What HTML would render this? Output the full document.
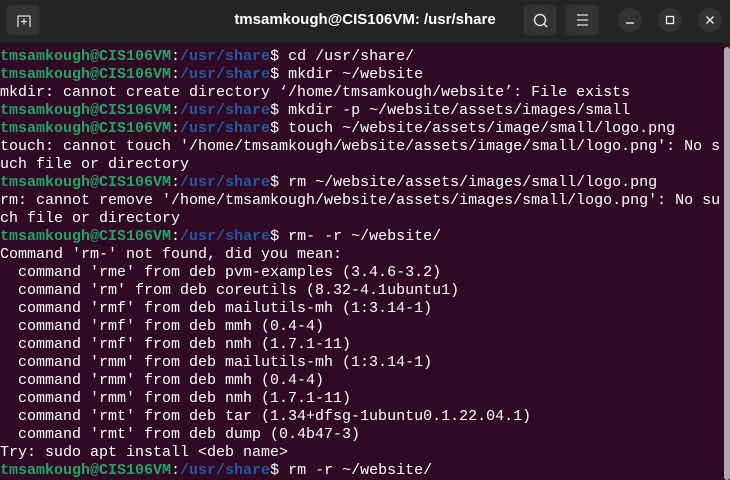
<html><head><style>
body{margin:0;width:730px;height:480px;overflow:hidden;background:#300a24;font-family:"Liberation Sans",sans-serif}
.bar{position:absolute;left:0;top:0;width:730px;height:43px;background:#242424;border-bottom:1px solid #1a1a1a}
.btn{position:absolute;top:4px;width:34px;height:32px;background:#333;border-radius:6px;border:1px solid #2c2c2c;box-sizing:border-box}
.c{position:absolute;top:8px;width:24px;height:24px;border-radius:50%;background:#333}
.title{position:absolute;left:0;width:730px;top:11px;text-align:center;color:#fff;font-weight:bold;font-size:15px}
pre{position:absolute;left:0;top:48px;margin:0;font-family:"Liberation Mono",monospace;font-size:15px;line-height:18px;color:#fff}
.g{color:#26a269;font-weight:bold}.b{color:#2457a0;font-weight:bold}
.sb{position:absolute;left:724px;top:47px;width:6px;height:433px;background:#aaa;border-radius:3px}
</style></head><body>
<div class="bar">
<div class="btn" style="left:6px"><svg width="34" height="32"><path d="M11 22V11h12v11M17 13.5v6M14 16.5h6" stroke="#ddd" stroke-width="1.3" fill="none"/></svg></div>
<div class="title">tmsamkough@CIS106VM: /usr/share</div>
<div class="btn" style="left:523px"><svg width="34" height="32"><circle cx="16" cy="15" r="5.5" stroke="#ddd" stroke-width="1.5" fill="none"/><path d="M20 19l3 3" stroke="#ddd" stroke-width="1.5"/></svg></div>
<div class="btn" style="left:565px"><svg width="34" height="32"><path d="M11 10h11M11 15h11M11 20h11" stroke="#ddd" stroke-width="1.3"/></svg></div>
<div class="c" style="left:618px"><svg width="24" height="24"><path d="M8 15h8" stroke="#eee" stroke-width="1.4"/></svg></div>
<div class="c" style="left:658px"><svg width="24" height="24"><rect x="8.5" y="8.5" width="7" height="7" stroke="#eee" stroke-width="1.3" fill="none"/></svg></div>
<div class="c" style="left:698px"><svg width="24" height="24"><path d="M8.5 8.5l7 7M15.5 8.5l-7 7" stroke="#eee" stroke-width="1.4"/></svg></div>
</div>
<pre><span class="g">tmsamkough@CIS106VM</span>:<span class="b">/usr/share</span>$ cd /usr/share/
<span class="g">tmsamkough@CIS106VM</span>:<span class="b">/usr/share</span>$ mkdir ~/website
mkdir: cannot create directory ‘/home/tmsamkough/website’: File exists
<span class="g">tmsamkough@CIS106VM</span>:<span class="b">/usr/share</span>$ mkdir -p ~/website/assets/images/small
<span class="g">tmsamkough@CIS106VM</span>:<span class="b">/usr/share</span>$ touch ~/website/assets/image/small/logo.png
touch: cannot touch '/home/tmsamkough/website/assets/image/small/logo.png': No s
uch file or directory
<span class="g">tmsamkough@CIS106VM</span>:<span class="b">/usr/share</span>$ rm ~/website/assets/images/small/logo.png
rm: cannot remove '/home/tmsamkough/website/assets/images/small/logo.png': No su
ch file or directory
<span class="g">tmsamkough@CIS106VM</span>:<span class="b">/usr/share</span>$ rm- -r ~/website/
Command 'rm-' not found, did you mean:
  command 'rme' from deb pvm-examples (3.4.6-3.2)
  command 'rm' from deb coreutils (8.32-4.1ubuntu1)
  command 'rmf' from deb mailutils-mh (1:3.14-1)
  command 'rmf' from deb mmh (0.4-4)
  command 'rmf' from deb nmh (1.7.1-11)
  command 'rmm' from deb mailutils-mh (1:3.14-1)
  command 'rmm' from deb mmh (0.4-4)
  command 'rmm' from deb nmh (1.7.1-11)
  command 'rmt' from deb tar (1.34+dfsg-1ubuntu0.1.22.04.1)
  command 'rmt' from deb dump (0.4b47-3)
Try: sudo apt install &lt;deb name&gt;
<span class="g">tmsamkough@CIS106VM</span>:<span class="b">/usr/share</span>$ rm -r ~/website/</pre>
<div class="sb"></div>
</body></html>
